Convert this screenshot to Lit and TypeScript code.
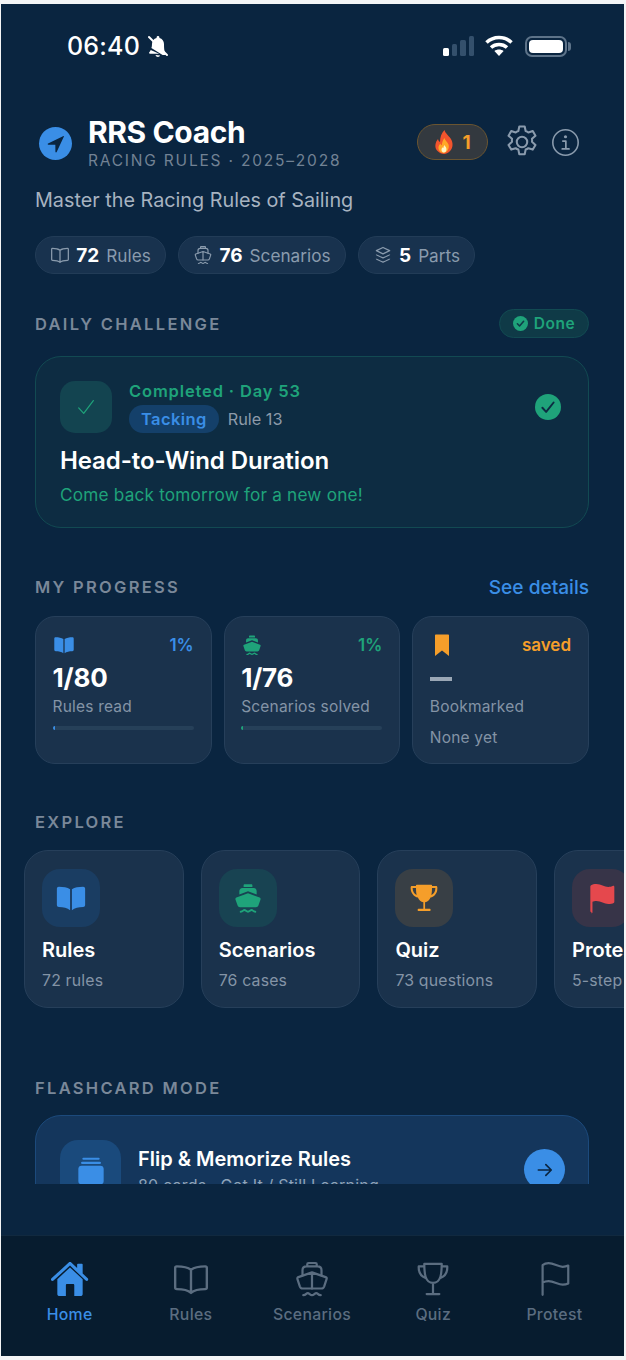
import { LitElement, css, html, svg } from 'lit';
import { customElement } from 'lit/decorators.js';

const icon = (body: unknown, size: number, cls = '') =>
  html`<svg class="ico ${cls}" width=${size} height=${size} viewBox="0 0 24 24">${body}</svg>`;

const bookFill = svg`<path fill="currentColor" d="M11.300 5.400C9.200 4.200 6.300 3.600 2.900 3.600c-.9 0-1.500.6-1.500 1.400v12.200c0 .9.6 1.500 1.500 1.500 3.400 0 6.400.5 8.400 2.400V6.300c0-.4 0-.7 0-.9zM12.700 5.400c2.100-1.200 5-1.800 8.400-1.800.9 0 1.500.6 1.500 1.400v12.200c0 .9-.6 1.500-1.500 1.500-3.400 0-6.400.5-8.400 2.400V5.400z"/>`;
const bookLine = svg`<path fill="none" stroke="currentColor" stroke-width="1.500" stroke-linejoin="round" d="M12 6.200C10 4.600 6.800 4 3 4c-.6 0-1 .4-1 1v12.400c0 .6.4 1 1 1 3.800 0 7 .6 9 2.400 2-1.800 5.200-2.400 9-2.400.6 0 1-.4 1-1V5c0-.6-.4-1-1-1-3.800 0-7 .6-9 2.200zM12 6.200v14.600"/>`;
const boatFill = svg`<path fill="currentColor" d="M9.500 1.700h5c.5 0 .8.400.8 1v1h-6.600v-1c0-.6.300-1 .8-1zM7.800 4.500h8.400c1.300 0 2.300 1 2.300 2.400v2.500L12 6.900 5.500 9.400V6.900c0-1.400 1-2.400 2.300-2.400zM12 8.500l8.700 3.200c.6.200.9.800.7 1.400l-1.600 4.600c-.3.800-1 1.300-1.800 1.300H6c-.8 0-1.500-.5-1.800-1.300l-1.600-4.600c-.2-.6.100-1.200.7-1.400z"/><path fill="none" stroke="currentColor" stroke-width="1.400" stroke-linecap="round" d="M6.500 22.300c1.800 0 1.800-1.300 2.800-1.300s1.500 1.300 2.700 1.300 1.700-1.300 2.700-1.300 1 1.300 2.800 1.300"/>`;
const boatLine = svg`<g fill="none" stroke="currentColor" stroke-width="1.400" stroke-linecap="round" stroke-linejoin="round"><path d="M9 4V2.700c0-.5.300-.8.800-.8h4.400c.5 0 .8.300.8.800V4M6 9.800V6.500C6 5 7 4 8.500 4h7C17 4 18 5 18 6.500v3.300"/><path d="M12 7.800l8.600 3c.6.200.8.700.6 1.300l-1.500 4.500c-.3.800-.9 1.400-1.800 1.400H6.100c-.9 0-1.500-.6-1.800-1.400l-1.500-4.500c-.2-.6 0-1.100.6-1.300zM12 7.800v10.400M6.500 22.200c1.800 0 1.800-1.300 2.800-1.300s1.500 1.300 2.700 1.300 1.700-1.300 2.700-1.300 1 1.300 2.800 1.300"/></g>`;
const trophyFill = svg`<path fill="currentColor" d="M6.500 2h11c.3 0 .5.200.5.500V3h3c.6 0 1 .4 1 1v1c0 3.400-2.300 6-5.100 6.700-.8 2-2.300 3.200-4.100 3.500V20h3.200c.6 0 1 .4 1 1s-.4 .8-1 .8H8.200c-.6 0-1-.2-1-.8s.4-1 1-1h3.300v-4.800c-1.800-.3-3.300-1.500-4.100-3.500C4.600 11 2.200 8.400 2 5V4c0-.6.4-1 1-1h3v-.5c0-.3.200-.5.500-.5zM3.500 4.500V5c.1 2.100 1.200 3.800 3 4.700C6.200 8.600 6 7 6 4.500zM20.500 4.500H18c0 2.500-.2 4.100-.5 5.200 1.800-.9 3-2.600 3-4.700z"/>`;
const trophyLine = svg`<g fill="none" stroke="currentColor" stroke-width="1.400" stroke-linecap="round" stroke-linejoin="round"><path d="M6.500 2.500h11c0 6-.5 12-5.500 12s-5.500-6-5.500-12zM6.500 4H3c-.2 3.500 1.500 6.300 4.300 7.300M17.500 4H21c.2 3.500-1.500 6.300-4.300 7.300M12 14.500v6.800M8 21.500h8"/></g>`;
const flagFill = svg`<path fill="currentColor" d="M4.800 22.500c-.5 0-.8-.4-.8-.8V3.300c0-.4.300-.7.600-.9C5.500 1.900 6.800 1.500 8.500 1.500c3.500 0 6 2.200 9 2.200 1.500 0 2.600-.3 3.300-.7.700-.3 1.200.1 1.200.7v11.100c0 .4-.2.700-.5.900-.9.500-2.200.8-4 .8-3 0-5.500-2.200-9-2.200-1.100 0-2.200.2-2.900.5v7.900c0 .4-.3.800-.8.800z"/>`;
const flagLine = svg`<path fill="none" stroke="currentColor" stroke-width="1.400" stroke-linecap="round" stroke-linejoin="round" d="M4.800 22V3.200c1-.8 2.400-1.200 3.800-1.200 3.400 0 5.900 2.300 8.900 2.300 1.300 0 2.500-.3 3.500-.8v11.300c-1 .5-2.200.8-3.500.8-3 0-5.500-2.300-8.900-2.300-1.400 0-2.800.4-3.800 1"/>`;
const homeFill = svg`<path fill="currentColor" d="M12 4.700l8 7.400v9.300c0 .8-.6 1.400-1.400 1.400h-3.900v-6.900c0-.4-.3-.7-.7-.7h-3.900c-.4 0-.7.300-.7.700v6.900H5.400c-.8 0-1.400-.6-1.400-1.400v-9.300z"/><path fill="currentColor" d="M12 1.300c.3 0 .6.100.8.300l3.700 3.500V2.800c0-.3.200-.5.500-.5h2.500c.3 0 .5.200.5.500v5.800l3.200 3c.4.400.4 1 .1 1.400-.4.400-1 .4-1.400 0L12 3.500 1.600 13c-.4.400-1 .4-1.400 0-.3-.4-.3-1 .1-1.400L11.200 1.600c.2-.2.500-.3.800-.3z"/>`;

const pills = [
  { icon: icon(bookLine, 20), n: '72', label: 'Rules', w: 131 },
  { icon: icon(boatLine, 20), n: '76', label: 'Scenarios', w: 168 },
  {
    icon: icon(
      svg`<g fill="none" stroke="currentColor" stroke-width="1.500" stroke-linejoin="round"><path d="M12 3l8 3.800-8 3.800-8-3.800z"/><path d="M4 11.500c0 .8 8 4 8 4s8-3.200 8-4M4 16.500c0 .8 8 4 8 4s8-3.200 8-4"/></g>`,
      20
    ),
    n: '5',
    label: 'Parts',
    w: 117,
  },
];

const progress = [
  { icon: icon(bookFill, 22), color: '#3a8ee6', pct: '1%', value: '1/80', label: 'Rules read' },
  { icon: icon(boatFill, 22), color: '#1fa37a', pct: '1%', value: '1/76', label: 'Scenarios solved' },
];

const explore = [
  { icon: bookFill, color: '#3a8ee6', tile: '#1a3d62', title: 'Rules', sub: '72 rules' },
  { icon: boatFill, color: '#1fa37a', tile: '#184352', title: 'Scenarios', sub: '76 cases' },
  { icon: trophyFill, color: '#f59e2a', tile: '#383f45', title: 'Quiz', sub: '73 questions' },
  { icon: flagFill, color: '#e5484d', tile: '#373448', title: 'Protest', sub: '5-step guide' },
];

const tabs = [
  { icon: homeFill, label: 'Home', active: true },
  { icon: bookLine, label: 'Rules' },
  { icon: boatLine, label: 'Scenarios' },
  { icon: trophyLine, label: 'Quiz' },
  { icon: flagLine, label: 'Protest' },
];

@customElement('app-root')
export class AppRoot extends LitElement {
  static styles = css`
    :host {
      display: block;
      width: 626px;
      height: 1360px;
      background: #f4f5f6;
      font-family: Inter, 'Noto Sans', sans-serif;
      overflow: hidden;
    }

    .ico {
      display: block;
      flex: none;
    }

    .screen {
      width: 623px;
      height: 1352px;
      margin: 4px 0 0 1px;
      background: #0a2540;
      display: flex;
      flex-direction: column;
      overflow: hidden;
    }

    .status {
      height: 84px;
      flex: none;
      display: flex;
      align-items: center;
      padding: 0 54px 0 66px;
      box-sizing: border-box;
      color: #fff;
      gap: 6px;
    }

    .status .time {
      font-size: 25px;
      font-weight: 500;
      letter-spacing: 0.2px;
    }

    .status .right {
      margin-left: auto;
      display: flex;
      align-items: center;
      gap: 11px;
    }

    .signal {
      display: flex;
      align-items: flex-end;
      gap: 3px;
      height: 20px;
    }

    .signal i {
      display: block;
      width: 5.500px;
      border-radius: 1.500px;
      background: #34506c;
    }

    .battery {
      width: 42px;
      height: 21px;
      box-sizing: border-box;
      border: 2px solid #5d7389;
      border-radius: 7px;
      padding: 2px;
      position: relative;
      margin: 0 3px 0 1px;
    }

    .battery::before {
      content: '';
      display: block;
      height: 100%;
      background: #fff;
      border-radius: 4px;
    }

    .battery::after {
      content: '';
      position: absolute;
      right: -6px;
      top: 4px;
      width: 3px;
      height: 9px;
      border-radius: 0 3px 3px 0;
      background: #5d7389;
    }

    .scroll {
      height: 1096px;
      flex: none;
      overflow: hidden;
      padding: 27px 35px 0 34px;
      box-sizing: border-box;
    }

    .brand {
      display: flex;
      align-items: center;
    }

    .logo {
      width: 33px;
      height: 33px;
      margin: 0 16px 0 4px;
      border-radius: 50%;
      background: #3a8ee6;
      color: #0a2540;
      display: flex;
      align-items: center;
      justify-content: center;
    }

    .name {
      font-size: 30px;
      line-height: 34px;
      font-weight: 700;
      letter-spacing: -0.4px;
      color: #fff;
    }

    .edition {
      font-size: 15.500px;
      line-height: 22px;
      letter-spacing: 1.800px;
      color: #728294;
      margin-top: 1px;
    }

    .actions {
      margin-left: auto;
      display: flex;
      align-items: center;
      color: #8a9bad;
      margin-bottom: 3px;
    }

    .streak {
      width: 71px;
      height: 36px;
      box-sizing: border-box;
      border: 1.500px solid #6b5530;
      border-radius: 18px;
      background: #33393f;
      display: flex;
      align-items: center;
      justify-content: center;
      gap: 8px;
      color: #f59e2a;
      font-size: 19px;
      font-weight: 700;
      margin-right: 14.500px;
    }

    .actions .info {
      margin: 0 9px 0 10.500px;
    }

    .tagline {
      font-size: 19.800px;
      line-height: 24px;
      color: #a7b3c0;
      margin-top: 16px;
    }

    .pills {
      display: flex;
      gap: 12px;
      margin-top: 24px;
    }

    .pill {
      height: 38px;
      box-sizing: border-box;
      border: 1.500px solid #223c57;
      border-radius: 19px;
      background: #18324e;
      display: flex;
      align-items: center;
      justify-content: center;
      gap: 6px;
      color: #8a9bad;
      font-size: 17.200px;
    }

    .pill b {
      color: #fff;
      font-weight: 700;
      font-size: 19px;
      margin: 0 1px 0 0;
    }

    .section-head {
      display: flex;
      align-items: center;
      justify-content: space-between;
      min-height: 24px;
    }

    .section-title {
      font-size: 16.500px;
      line-height: 24px;
      font-weight: 600;
      letter-spacing: 2.300px;
      color: #7a8899;
    }

    .done {
      height: 29px;
      width: 90px;
      box-sizing: border-box;
      border: 1.500px solid #124a52;
      border-radius: 15px;
      background: #0f3a47;
      color: #1fa37a;
      display: flex;
      align-items: center;
      justify-content: center;
      gap: 6px;
      font-size: 15.500px;
      font-weight: 600;
      letter-spacing: 0.5px;
    }

    .daily {
      height: 172px;
      box-sizing: border-box;
      margin-top: 18px;
      padding: 24px;
      border: 1.500px solid #124a52;
      border-radius: 26px;
      background: #0d2c42;
    }

    .daily-top {
      display: flex;
      align-items: center;
      gap: 17px;
    }

    .check-tile {
      width: 52px;
      height: 52px;
      border-radius: 15px;
      background: #134450;
      color: #1fa37a;
      display: flex;
      align-items: center;
      justify-content: center;
    }

    .daily-meta {
      flex: 1;
    }

    .completed {
      font-size: 16.500px;
      line-height: 20px;
      font-weight: 600;
      letter-spacing: 0.850px;
      color: #1fa37a;
      margin-top: -1px;
    }

    .tags {
      display: flex;
      align-items: center;
      gap: 9px;
      margin-top: 4px;
      color: #8c9aa9;
      font-size: 16.300px;
    }

    .chip {
      height: 28px;
      padding: 0 12px;
      border-radius: 14px;
      background: #14406a;
      color: #3a8ee6;
      font-size: 16.500px;
      font-weight: 600;
      line-height: 28px;
      letter-spacing: 0.4px;
    }

    .tick {
      width: 26px;
      height: 26px;
      border-radius: 50%;
      background: #1fa37a;
      color: #0d2c42;
      display: flex;
      align-items: center;
      justify-content: center;
      margin-right: 3px;
    }

    .daily h2 {
      margin: 13px 0 0;
      font-size: 24px;
      line-height: 30px;
      font-weight: 600;
      color: #fff;
      letter-spacing: -0.1px;
    }

    .daily p {
      margin: 8px 0 0;
      font-size: 17.200px;
      line-height: 22px;
      letter-spacing: 0.2px;
      color: #1fa37a;
    }

    .link {
      font-size: 19.100px;
      line-height: 24px;
      font-weight: 500;
      color: #3a8ee6;
    }

    .stats {
      display: flex;
      gap: 12px;
      margin-top: 17px;
    }

    .stat {
      flex: 1;
      height: 148px;
      box-sizing: border-box;
      padding: 17px 17px 0 16.500px;
      border: 1.500px solid #263f5a;
      border-radius: 20px;
      background: #1a324c;
    }

    .stat-top {
      display: flex;
      align-items: center;
      justify-content: space-between;
      height: 22px;
    }

    .stat-top span {
      font-size: 17px;
      font-weight: 600;
    }

    .stat-value {
      font-size: 26px;
      line-height: 32px;
      font-weight: 700;
      color: #fff;
      margin-top: 6px;
      letter-spacing: -0.2px;
    }

    .dash {
      width: 22px;
      height: 4px;
      background: #9aa7b5;
      margin: 21px 0 15px;
    }

    .stat-label {
      font-size: 15.500px;
      line-height: 22px;
      letter-spacing: 0.2px;
      color: #8494a6;
      margin-top: 2px;
    }

    .stat .none {
      margin-top: 9px;
    }

    .bar {
      height: 4px;
      border-radius: 2px;
      background: #264059;
      margin-top: 8px;
      overflow: hidden;
    }

    .bar i {
      display: block;
      height: 100%;
      width: 2px;
    }

    .explore {
      display: flex;
      gap: 17.200px;
      margin: 16px -36px 0 -11px;
    }

    .tile {
      flex: none;
      width: 159.500px;
      height: 157.500px;
      box-sizing: border-box;
      padding: 17.500px 17px 0;
      border: 1.500px solid #263f5a;
      border-radius: 24px;
      background: #1a324c;
      white-space: nowrap;
    }

    .tile-icon {
      width: 58px;
      height: 58px;
      border-radius: 18px;
      display: flex;
      align-items: center;
      justify-content: center;
    }

    .tile h3 {
      margin: 9px 0 0;
      font-size: 20px;
      line-height: 28px;
      font-weight: 600;
      color: #fff;
    }

    .tile p {
      margin: 6px 0 0;
      font-size: 15.800px;
      line-height: 22px;
      letter-spacing: 0.2px;
      color: #8494a6;
    }

    .flash {
      height: 130px;
      box-sizing: border-box;
      margin-top: 15px;
      padding: 24px;
      border: 1.500px solid #1c4a7c;
      border-radius: 26px;
      background: #14365c;
      display: flex;
      gap: 17px;
    }

    .flash-icon {
      width: 61px;
      height: 61px;
      border-radius: 18px;
      background: #1a4a7c;
      color: #3a8ee6;
      display: flex;
      align-items: center;
      justify-content: center;
    }

    .flash-text {
      flex: 1;
      margin-top: 5px;
    }

    .flash-title {
      font-size: 20px;
      line-height: 28px;
      font-weight: 600;
      color: #fff;
    }

    .flash-sub {
      font-size: 16px;
      line-height: 22px;
      letter-spacing: 0.2px;
      color: #8fa3b8;
      margin-top: 1px;
    }

    .go {
      width: 41px;
      height: 41px;
      border-radius: 50%;
      background: #3a8ee6;
      color: #0a2540;
      display: flex;
      align-items: center;
      justify-content: center;
      margin: 9px -1px 0 0;
    }

    nav {
      margin-top: auto;
      height: 121px;
      flex: none;
      box-sizing: border-box;
      padding: 24px 9px 0 8px;
      border-top: 1px solid #11293f;
      background: #071c2f;
      display: flex;
    }

    nav a {
      flex: 1;
      display: flex;
      flex-direction: column;
      align-items: center;
      gap: 2px;
      color: #5b6d80;
      font-size: 15.800px;
      line-height: 30px;
      font-weight: 500;
      letter-spacing: 0.3px;
    }

    nav a.active {
      color: #3a8ee6;
    }
  `;

  private renderStatus() {
    return html`
      <div class="status">
        <span class="time">06:40</span>
        ${icon(
          svg`<path fill="currentColor" d="M12 2c-.8 0-1.400.6-1.400 1.300v.6C7.700 4.600 6 7 6 10c0 1.500-.2 2.900-.6 3.900L16.600 21H19c.7 0 1.100-.8.700-1.400-1.100-1.400-1.700-3.600-1.700-9.600 0-3-1.700-5.400-4.600-6.100v-.6C13.400 2.600 12.800 2 12 2zM4.700 15.900c-.3.900-.8 1.700-1.400 2.400-.5.600-.1 1.400.7 1.400h9.200zM9.500 21c.3 1.200 1.300 2 2.500 2 .9 0 1.800-.5 2.200-1.400z"/><path stroke="currentColor" stroke-width="2" stroke-linecap="round" d="M3 3l18 18"/>`,
          24
        )}
        <div class="right">
          <div class="signal">
            <i style="height:8px;background:#fff"></i><i style="height:12px"></i><i style="height:16px"></i><i style="height:20px"></i>
          </div>
          <svg class="ico" width="28" height="22" viewBox="0 0 28 22">
            <path fill="none" stroke="#fff" stroke-width="3.600" d="M1.500 7.500C8.500.8 19.500.8 26.500 7.500M6 12.500c4.500-4 11.500-4 16 0"/>
            <path fill="#fff" d="M14 21l-4.600-5c2.500-2 6.700-2 9.200 0z"/>
          </svg>
          <div class="battery"></div>
        </div>
      </div>
    `;
  }

  private renderHeader() {
    return html`
      <div class="brand">
        <div class="logo">
          ${icon(svg`<path fill="currentColor" d="M21 2.500L2.500 11.300c-.8.400-.6 1.500.3 1.500l8.400.1.100 8.400c0 .9 1.100 1.100 1.500.3L21.500 3c.2-.4-.1-.7-.5-.5z"/>`, 20)}
        </div>
        <div>
          <div class="name">RRS Coach</div>
          <div class="edition">RACING RULES · 2025–2028</div>
        </div>
        <div class="actions">
          <div class="streak">
            <svg class="ico" width="20" height="24" viewBox="0 0 20 24">
              <path fill="#f2542d" d="M10.500 0c1 4 5 6 7 10 2 4.500 1 9-2 11.500-1.500 1.500-3.500 2.500-5.500 2.500s-5-1-7-3.500C.5 17.500 1 12.500 4 9c.3 1.500 1 2.500 2 3 0-5 1.500-9 4.500-12z"/>
              <path fill="#ffa726" d="M10.500 8c.5 2.500 3 4 4 6.500 1 3-.5 7.500-4.500 8.500-3.500 0-6-3-5.500-6 .3-1.500 1-2.500 2-3.500.2 1 .7 1.500 1.300 1.800C8 12.500 9 10 10.500 8z"/>
              <path fill="#fff3c4" d="M10.500 15c.3 1.200 2 2.200 2 4.200 0 2-1.200 3.300-2.700 3.300S7.300 21 7.500 19.500c.1-1 .7-1.700 1.300-2.200.1.400.3.700.6.800 0-1 .4-2.200 1.100-3.100z"/>
            </svg>
            1
          </div>
          ${icon(
            svg`<circle cx="12" cy="12" r="3.300" fill="none" stroke="currentColor" stroke-width="1.300"/><path fill="none" stroke="currentColor" stroke-width="1.300" stroke-linejoin="round" d="M10.300 2.200h3.400l.6 2.900c.6.200 1.200.5 1.700.9l2.800-.9 1.700 2.900-2.200 2c.1.600.1 1.300 0 1.900l2.200 2-1.700 2.900-2.800-.9c-.5.400-1.100.7-1.700.9l-.6 2.900h-3.400l-.6-2.900c-.6-.2-1.200-.5-1.700-.9l-2.800.9-1.700-2.900 2.200-2c-.1-.6-.1-1.300 0-1.900l-2.200-2 1.700-2.900 2.800.9c.5-.4 1.100-.7 1.700-.9z"/>`,
            38
          )}
          ${icon(
            svg`<circle cx="12" cy="12" r="10.500" fill="none" stroke="currentColor" stroke-width="1.300"/><path fill="none" stroke="currentColor" stroke-width="1.400" stroke-linecap="round" stroke-linejoin="round" d="M9.800 10.800H12.300V17M9.300 17.300h5.600"/><circle cx="12" cy="7.200" r="1.300" fill="currentColor"/>`,
            29,
            'info'
          )}
        </div>
      </div>
      <div class="tagline">Master the Racing Rules of Sailing</div>
      <div class="pills">
        ${pills.map(
          (p) => html`<div class="pill" style="width:${p.w}px">${p.icon}<b>${p.n}</b>${p.label}</div>`
        )}
      </div>
    `;
  }

  private renderDaily() {
    return html`
      <div class="section-head" style="margin-top:35px">
        <span class="section-title">DAILY CHALLENGE</span>
        <span class="done">
          <svg class="ico" width="15" height="15" viewBox="0 0 24 24">
            <circle cx="12" cy="12" r="12" fill="#1fa37a"/>
            <path fill="none" stroke="#0f3a47" stroke-width="2.500" stroke-linecap="round" stroke-linejoin="round" d="M7 12.500l3.500 3.500L17 8.500"/>
          </svg>
          Done
        </span>
      </div>
      <div class="daily">
        <div class="daily-top">
          <div class="check-tile">
            ${icon(svg`<path fill="none" stroke="currentColor" stroke-width="1.300" stroke-linecap="round" stroke-linejoin="round" d="M4 13l5.500 6L20 5"/>`, 22)}
          </div>
          <div class="daily-meta">
            <div class="completed">Completed · Day 53</div>
            <div class="tags"><span class="chip">Tacking</span>Rule 13</div>
          </div>
          <div class="tick">
            ${icon(svg`<path fill="none" stroke="currentColor" stroke-width="2.600" stroke-linecap="round" stroke-linejoin="round" d="M4.500 13l5 5.500L19.500 6"/>`, 18)}
          </div>
        </div>
        <h2>Head-to-Wind Duration</h2>
        <p>Come back tomorrow for a new one!</p>
      </div>
    `;
  }

  private renderProgress() {
    return html`
      <div class="section-head" style="margin-top:47px">
        <span class="section-title">MY PROGRESS</span>
        <span class="link">See details</span>
      </div>
      <div class="stats">
        ${progress.map(
          (p) => html`
            <div class="stat">
              <div class="stat-top" style="color:${p.color}">${p.icon}<span>${p.pct}</span></div>
              <div class="stat-value">${p.value}</div>
              <div class="stat-label">${p.label}</div>
              <div class="bar"><i style="background:${p.color}"></i></div>
            </div>
          `
        )}
        <div class="stat">
          <div class="stat-top" style="color:#f59e2a">
            ${icon(svg`<path fill="currentColor" d="M6 1.500h12c.6 0 1 .4 1 1v20.500l-7-5.500-7 5.500V2.500c0-.6.4-1 1-1z"/>`, 24)}
            <span>saved</span>
          </div>
          <div class="dash"></div>
          <div class="stat-label">Bookmarked</div>
          <div class="stat-label none">None yet</div>
        </div>
      </div>
    `;
  }

  private renderExplore() {
    return html`
      <div class="section-head" style="margin-top:46px">
        <span class="section-title">EXPLORE</span>
      </div>
      <div class="explore">
        ${explore.map(
          (e) => html`
            <div class="tile">
              <div class="tile-icon" style="background:${e.tile};color:${e.color}">${icon(e.icon, 32)}</div>
              <h3>${e.title}</h3>
              <p>${e.sub}</p>
            </div>
          `
        )}
      </div>
    `;
  }

  private renderFlash() {
    return html`
      <div class="section-head" style="margin-top:68.500px">
        <span class="section-title">FLASHCARD MODE</span>
      </div>
      <div class="flash">
        <div class="flash-icon">
          ${icon(svg`<rect x="5.500" y="2" width="13" height="1.600" rx=".8" fill="currentColor"/><rect x="4.500" y="5" width="15" height="1.800" rx=".9" fill="currentColor"/><rect x="2.500" y="8" width="19" height="14" rx="2.500" fill="currentColor"/>`, 32)}
        </div>
        <div class="flash-text">
          <div class="flash-title">Flip &amp; Memorize Rules</div>
          <div class="flash-sub">80 cards · Got It / Still Learning</div>
        </div>
        <div class="go">
          ${icon(svg`<path fill="none" stroke="currentColor" stroke-width="2" stroke-linecap="round" stroke-linejoin="round" d="M4 12h15M13 5.500l6.500 6.500-6.500 6.500"/>`, 20)}
        </div>
      </div>
    `;
  }

  render() {
    return html`
      <div class="screen">
        ${this.renderStatus()}
        <div class="scroll">
          ${this.renderHeader()} ${this.renderDaily()} ${this.renderProgress()} ${this.renderExplore()} ${this.renderFlash()}
        </div>
        <nav>
          ${tabs.map(
            (t) => html`<a class=${t.active ? 'active' : ''}>${icon(t.icon, 38)}${t.label}</a>`
          )}
        </nav>
      </div>
    `;
  }
}
